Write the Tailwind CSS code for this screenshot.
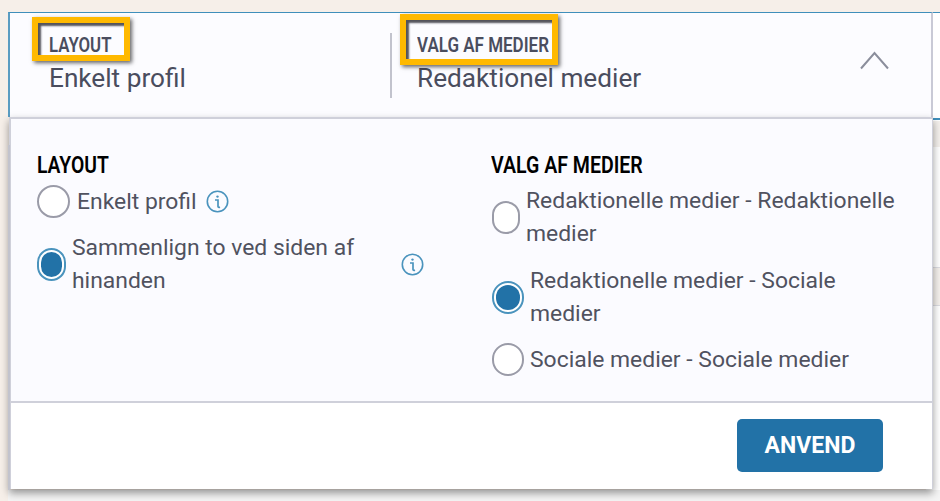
<!doctype html>
<html lang="da"><head><meta charset="utf-8"><title>Layout</title>
<script src="https://cdn.jsdelivr.net/npm/@tailwindcss/browser@4"></script></head>
<body class="m-0">
<div class="relative w-[940px] h-[501px] overflow-hidden bg-[#f6efe9] font-['Roboto',sans-serif] text-[#4a4d5e]">
  <!-- page behind the dropdown -->
  <div class="absolute left-[926px] top-[12px] w-[14px] h-[489px] bg-white border-t border-[#3f8fbb]">
    <div class="absolute top-[105px] left-[7px] w-[7px] h-[2px] bg-[#3f8fbb]"></div>
    <div class="absolute top-[108px] left-0 w-full h-[26px] bg-[#f4f0ec]"></div>
    <div class="absolute top-[254px] left-0 w-full h-[39px] bg-[#f4f0ec] border-y border-[#dddde2]"></div>
  </div>
  <div class="absolute left-[8px] top-[490px] w-[932px] h-[11px] bg-[#f4f4f4]"></div>

  <div class="relative pl-2 pt-3">
    <!-- header -->
    <div class="flex w-[925px] h-[105px] bg-[#fcfcff] border-t border-l-2 border-r-2 border-t-[#3f8fbb] border-l-[#5a9cc2] border-r-[#c9cad6]">
      <div class="w-[380px] pl-[39px] pt-[21px]">
        <div class="text-[20px] leading-[22px] font-semibold origin-left scale-x-[0.84]">LAYOUT</div>
        <div class="text-[26.2px] leading-[32px] mt-[6px]">Enkelt profil</div>
      </div>
      <div class="w-[2px] h-[65px] mt-[20px] bg-[#c2c3cd]"></div>
      <div class="flex-1 pl-[25px] pt-[21px]">
        <div class="text-[20px] leading-[22px] font-semibold origin-left scale-x-[0.85]">VALG AF MEDIER</div>
        <div class="text-[26.2px] leading-[32px] mt-[6px]">Redaktionel medier</div>
      </div>
      <div class="pt-[38px] pr-[42px]">
        <svg width="29" height="19" viewBox="0 0 29 19" fill="none" stroke="#8b8e9c" stroke-width="2"><path d="M1 17.5 14.5 2 28 17.5"/></svg>
      </div>
    </div>

    <!-- panel -->
    <div class="ml-[1px] w-[924px] h-[372px] bg-white border-l-2 border-t-2 border-r border-[#cfd0da] shadow-[0_4px_8px_rgba(0,0,0,0.4)] flex flex-col">
      <div class="h-[284px] shrink-0 bg-[#fbfbff] border-b-2 border-[#cfd0da] flex text-[22.9px] leading-[33px] text-[#50525f]">
        <!-- left column -->
        <div class="w-[480px] pl-[26px] pt-[35px]">
          <div class="text-[23px] leading-[24px] font-semibold text-black origin-left scale-x-[0.84]">LAYOUT</div>
          <div class="flex items-center h-[33px] mt-[7px]">
            <span class="w-[33px] h-[33px] rounded-full bg-white border-2 border-[#9a9ba8] shrink-0"></span>
            <span class="ml-[7px] whitespace-nowrap">Enkelt profil</span>
            <svg class="ml-[9px]" width="23" height="23" viewBox="0 0 23 23" fill="none" stroke="#4a93bd"><circle cx="11.5" cy="11.5" r="10.2" stroke-width="1.6"/><circle cx="11.5" cy="6.6" r="1.2" fill="#4a93bd" stroke="none"/><path d="M9 10h3v6.5c0 .8.7 1 2 .6" stroke-width="1.7"/></svg>
          </div>
          <div class="flex items-center h-[66px] mt-[13px]">
            <span class="flex items-center justify-center w-[29px] h-[33px] rounded-full bg-white border-2 border-[#4a93bd] shrink-0">
              <span class="block w-[21px] h-[25px] rounded-full bg-[#2272a7]"></span>
            </span>
            <span class="ml-[6px] w-[330px]">Sammenlign to ved siden af hinanden</span>
            <svg class="-ml-px" width="23" height="23" viewBox="0 0 23 23" fill="none" stroke="#4a93bd"><circle cx="11.5" cy="11.5" r="10.2" stroke-width="1.6"/><circle cx="11.5" cy="6.6" r="1.2" fill="#4a93bd" stroke="none"/><path d="M9 10h3v6.5c0 .8.7 1 2 .6" stroke-width="1.7"/></svg>
          </div>
        </div>
        <!-- right column -->
        <div class="flex-1 pt-[35px]">
          <div class="text-[23px] leading-[24px] font-semibold text-black origin-left scale-x-[0.85]">VALG AF MEDIER</div>
          <div class="flex items-center h-[66px] mt-[6px]">
            <span class="w-[28px] h-[33px] ml-px rounded-full bg-white border-2 border-[#9a9ba8] shrink-0"></span>
            <span class="ml-[6px] w-[385px]">Redaktionelle medier - Redaktionelle medier</span>
          </div>
          <div class="flex items-center h-[66px] mt-[14px]">
            <span class="flex items-center justify-center w-[32px] h-[33px] ml-px rounded-full bg-white border-2 border-[#4a93bd] shrink-0">
              <span class="block w-[24px] h-[25px] rounded-full bg-[#2272a7]"></span>
            </span>
            <span class="ml-[6px] w-[330px]">Redaktionelle medier - Sociale medier</span>
          </div>
          <div class="flex items-center h-[33px] mt-[13px]">
            <span class="w-[32px] h-[33px] ml-px rounded-full bg-white border-2 border-[#9a9ba8] shrink-0"></span>
            <span class="ml-[6px] whitespace-nowrap">Sociale medier - Sociale medier</span>
          </div>
        </div>
      </div>
      <div class="flex-1 flex justify-end items-start pt-[16px] pr-[49px]">
        <button class="w-[146px] h-[53px] pt-[2px] rounded-[5px] bg-[#2272a7] text-white text-[23px] font-bold">ANVEND</button>
      </div>
    </div>
  </div>

  <!-- left edge of the panel -->
  <div class="absolute left-[8px] top-[145px] w-[2px] h-[345px] bg-[#c2c3cd]"></div>

  <!-- annotation boxes -->
  <div class="absolute left-[32px] top-[17px] w-[98px] h-[44px] border-[6px] border-[#ffb900] shadow-[2px_2px_4px_rgba(0,0,0,0.6),inset_3px_3px_2px_rgba(40,40,50,0.8)]"></div>
  <div class="absolute left-[400px] top-[14px] w-[158px] h-[51px] border-[6px] border-[#ffb900] shadow-[2px_2px_4px_rgba(0,0,0,0.6),inset_3px_3px_2px_rgba(40,40,50,0.8)]"></div>
</div>
</body></html>
